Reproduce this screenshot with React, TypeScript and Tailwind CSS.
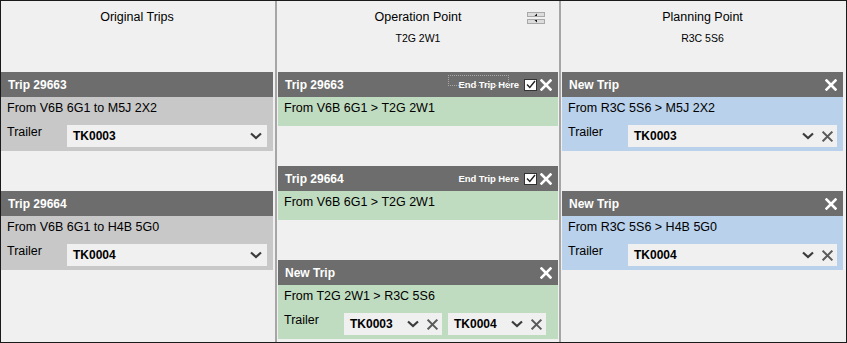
import React from "react";

type Sel = { value: string; clear?: boolean };

function Chevron() {
  return (
    <svg width="12" height="8" viewBox="0 0 12 8" className="shrink-0">
      <path d="M1 1.5 L6 6 L11 1.5" fill="none" stroke="#3c3c3c" strokeWidth="2.2" />
    </svg>
  );
}

function ClearX({ color = "#5a5a5a", size = 11, w = 2.2 }: { color?: string; size?: number; w?: number }) {
  return (
    <svg width={size} height={size} viewBox="0 0 12 12" className="shrink-0">
      <path d="M1.5 1.5 L10.5 10.5 M10.5 1.5 L1.5 10.5" stroke={color} strokeWidth={w} strokeLinecap="square" />
    </svg>
  );
}

function Select({ value, clear, wide }: Sel & { wide?: boolean }) {
  return (
    <div
      className={`h-[22px] bg-[#f0f0f0] flex items-center pl-[6px] pr-[4px] ${wide ? "flex-1" : "w-[98px]"}`}
    >
      <span className="flex-1 font-bold text-[12px] text-black">{value}</span>
      <Chevron />
      {clear && (
        <span className="ml-[8px]">
          <ClearX />
        </span>
      )}
      {!clear && <span className="w-[1px]" />}
    </div>
  );
}

function Header({
  title,
  end,
  focus,
  closable,
}: {
  title: string;
  end?: boolean;
  focus?: boolean;
  closable?: boolean;
}) {
  return (
    <div className="h-[25px] bg-[#6d6d6d] flex items-center pl-[7px] pr-[6px] text-white">
      <span className="flex-1 font-bold text-[12px]">{title}</span>
      {end && (
        <span className="relative flex items-center mr-[5px]">
          {focus && (
            <span className="absolute left-[-11px] top-[-5px] w-[61px] h-[11px] border border-dotted border-[#a8a8a8]" />
          )}
          <span className="font-bold text-[9.5px] leading-[10px] tracking-[-0.1px]">End Trip Here</span>
        </span>
      )}
      {end && (
        <span className="w-[13px] h-[12px] bg-white border border-[#333] flex items-center justify-center mr-[3px]">
          <svg width="10" height="9" viewBox="0 0 10 9">
            <path d="M1 4.5 L3.8 7.5 L9 1" fill="none" stroke="#222" strokeWidth="1.4" />
          </svg>
        </span>
      )}
      {closable && <ClearX color="#ffffff" size={12} w={2.6} />}
    </div>
  );
}

function Panel({
  title,
  route,
  tone,
  end,
  focus,
  selects,
  wide,
  closable = true,
}: {
  title: string;
  route: string;
  tone: string;
  end?: boolean;
  focus?: boolean;
  selects?: Sel[];
  wide?: boolean;
  closable?: boolean;
}) {
  return (
    <div className="mb-[40px]">
      <Header title={title} end={end} focus={focus} closable={closable} />
      <div className={`${tone} pt-[1px] ${selects ? "pb-[4px]" : "pb-[8px]"}`}>
        <div className="px-[6px] leading-[20px]">{route}</div>
        {selects && (
          <div className={`flex items-start mt-[7px] pl-[6px] ${wide ? "pr-[6px]" : "pr-[12px]"}`}>
            <span className="w-[60px] leading-[15px]">Trailer</span>
            <div className="flex-1 flex gap-[6px]">
              {selects.map((s) => (
                <Select key={s.value} value={s.value} clear={s.clear} wide={wide} />
              ))}
            </div>
          </div>
        )}
      </div>
    </div>
  );
}

function ColHead({ title, sub, tool }: { title: string; sub?: string; tool?: boolean }) {
  return (
    <div className="relative h-[71px] pt-[8px] flex flex-col items-center">
      <div className="text-[12.5px] leading-[16px]">{title}</div>
      {sub && <div className="text-[10.5px] leading-[14px] mt-[6px]">{sub}</div>}
      {tool && (
        <div className="absolute right-[13px] top-[11px] flex flex-col gap-[2px]">
          <svg width="18" height="5" viewBox="0 0 18 5">
            <rect x="0.5" y="0.5" width="17" height="4" fill="#dcdcdc" stroke="#a8a8a8" />
            <path d="M10 1.5 L10 4 L7.5 4 Z" fill="#111" />
          </svg>
          <svg width="18" height="5" viewBox="0 0 18 5">
            <rect x="0.5" y="0.5" width="17" height="4" fill="#dcdcdc" stroke="#a8a8a8" />
            <path d="M7.5 1 L10 1 L10 3.5 Z" fill="#111" />
          </svg>
        </div>
      )}
    </div>
  );
}

export default function App() {
  const grey = "bg-[#c8c8c8]";
  const green = "bg-[#c0dcc0]";
  const blue = "bg-[#b9d1ea]";

  return (
    <div
      className="w-[847px] h-[343px] bg-[#f0f0f0] border border-[#1a1a1a] flex text-[12.5px] text-black overflow-hidden"
      style={{ fontFamily: '"Liberation Sans", Arial, sans-serif' }}
    >
      {/* Original trips */}
      <div className="w-[276px] pr-[2px] border-r-2 border-[#a6a6a6]">
        <ColHead title="Original Trips" />
        <Panel
          title="Trip 29663"
          route="From V6B 6G1 to M5J 2X2"
          tone={grey}
          wide
          closable={false}
          selects={[{ value: "TK0003" }]}
        />
        <Panel
          title="Trip 29664"
          route="From V6B 6G1 to H4B 5G0"
          tone={grey}
          wide
          closable={false}
          selects={[{ value: "TK0004" }]}
        />
      </div>

      {/* Operation point */}
      <div className="w-[284px] px-[1px] border-r-2 border-[#a6a6a6]">
        <ColHead title="Operation Point" sub="T2G 2W1" tool />
        <Panel title="Trip 29663" route="From V6B 6G1 > T2G 2W1" tone={green} end focus />
        <Panel title="Trip 29664" route="From V6B 6G1 > T2G 2W1" tone={green} end />
        <Panel
          title="New Trip"
          route="From T2G 2W1 > R3C 5S6"
          tone={green}
          selects={[
            { value: "TK0003", clear: true },
            { value: "TK0004", clear: true },
          ]}
        />
      </div>

      {/* Planning point */}
      <div className="flex-1 pl-[1px] pr-[3px]">
        <ColHead title="Planning Point" sub="R3C 5S6" />
        <Panel title="New Trip" route="From R3C 5S6 > M5J 2X2" tone={blue} wide selects={[{ value: "TK0003", clear: true }]} />
        <Panel title="New Trip" route="From R3C 5S6 > H4B 5G0" tone={blue} wide selects={[{ value: "TK0004", clear: true }]} />
      </div>
    </div>
  );
}
